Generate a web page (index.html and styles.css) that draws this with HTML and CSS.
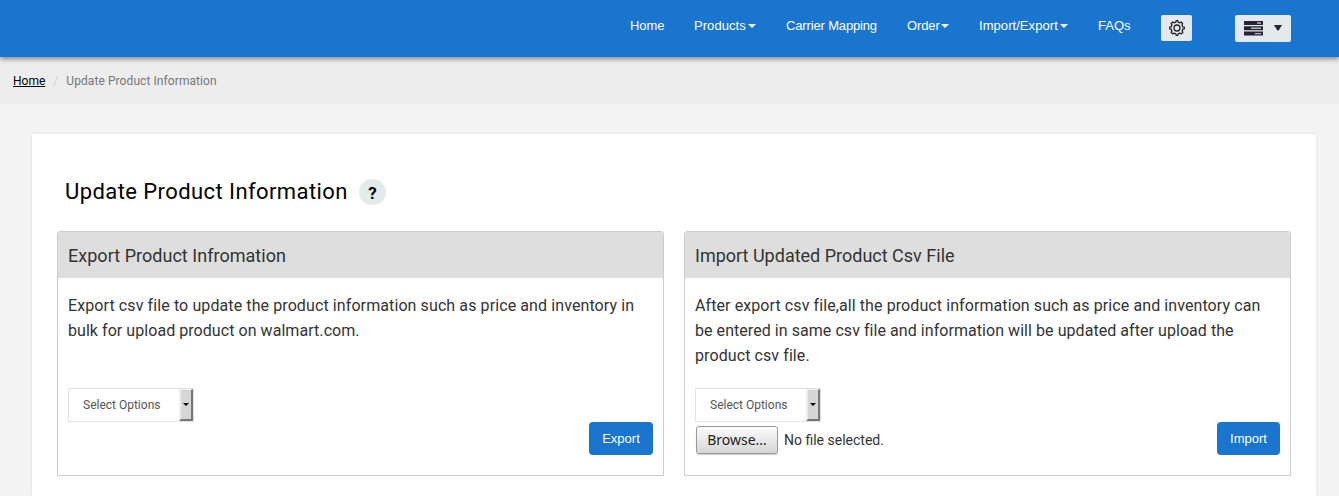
FILE: index.html
```html
<!DOCTYPE html>
<html lang="en">
<head>
<meta charset="utf-8">
<title>Update Product Information</title>
<link rel="stylesheet" href="styles.css">
</head>
<body>
<header class="navbar">
  <nav class="nav-links">
    <a class="nav-home">Home</a>
    <a class="nav-products">Products<i class="caret"></i></a>
    <a class="nav-carrier">Carrier Mapping</a>
    <a class="nav-order">Order<i class="caret"></i></a>
    <a class="nav-import">Import/Export<i class="caret"></i></a>
    <a class="nav-faqs">FAQs</a>
  </nav>
  <button class="gear-btn" aria-label="Settings">
    <svg width="16" height="16" viewBox="0 0 16 16" fill="none" stroke="#222" stroke-width="1.3" stroke-linejoin="round">
      <path d="M6.9 2.1 7.2.7H8.8L9.1 2.1 10.9 2.8 12.1 2 13.6 3.5 13 4.9 13.7 6.8 15.3 7.2V8.8L13.8 9.2 13.1 11 13.9 12.4 12.5 13.9 11.1 13.1 9.2 13.9 8.8 15.3H7.2L6.8 13.9 4.9 13.1 3.5 13.9 2.1 12.4 2.9 11 2.2 9.2.7 8.8V7.2L2.2 6.8 2.9 4.9 2.2 3.5 3.7 2 5 2.8Z"/>
      <circle cx="8" cy="8" r="3"/>
    </svg>
  </button>
  <button class="menu-btn" aria-label="Menu">
    <svg width="19" height="15" viewBox="0 0 19 15">
      <path fill="#272235" d="M0 0H19V4H0ZM0 5.3H19V9.3H0ZM0 10.6H19V14.6H0Z"/>
      <path fill="#b4b6be" d="M13 1.2H17V2.7H13ZM7 6.5H17V8H7ZM11 11.9H17V13.3H11Z"/>
    </svg>
    <svg width="8" height="6" viewBox="0 0 8 6"><path fill="#272235" d="M0 0H8L4.6 5.5H3.4Z"/></svg>
  </button>
</header>
<div class="breadcrumb"><a class="crumb-home">Home</a><span class="crumb-sep">/</span><span class="crumb-current">Update Product Information</span></div>
<main class="content">
  <div class="title-row"><h1 class="title">Update Product Information</h1><span class="help">?</span></div>
  <div class="panels">
    <section class="panel">
      <h2 class="panel-title panel-title-export">Export Product Infromation</h2>
      <div class="panel-body">
        <p class="desc">Export csv file to update the product information such as price and inventory in<br><span class="tight">bulk for upload product on walmart.com.</span></p>
        <div class="select"><span class="select-text">Select Options</span><span class="select-arrow"><i></i></span></div>
        <div class="actions"><span></span><button class="btn">Export</button></div>
      </div>
    </section>
    <section class="panel">
      <h2 class="panel-title">Import Updated Product Csv File</h2>
      <div class="panel-body">
        <p class="desc desc-import">After export csv file,all the product information such as price and inventory can<br><span class="tight">be entered in same csv file and information will be updated after upload the</span><br>product csv file.</p>
        <div class="select"><span class="select-text">Select Options</span><span class="select-arrow"><i></i></span></div>
        <div class="actions"><div class="file"><button class="browse">Browse...</button><span>No file selected.</span></div><button class="btn btn-import">Import</button></div>
      </div>
    </section>
  </div>
</main>
</body>
</html>
```
FILE: styles.css
```css
* { box-sizing: border-box; }
body { margin: 0; height: 496px; background: #f4f4f4; font-family: Roboto, sans-serif; color: #333; }
button { margin: 0; padding: 0; border: 0; }
.navbar { position: relative; height: 57px; padding: 15px 48px 0 0; display: flex; justify-content: flex-end; align-items: flex-start; background: #1a75cf; box-shadow: 0 2px 5px rgba(0,0,0,.45); }
.nav-links { display: flex; gap: 30px; margin-right: 30px; font: 13px/20px "Liberation Sans", Arial, sans-serif; color: #fff; }
.nav-links a { display: flex; align-items: center; justify-content: space-between; height: 21px; white-space: nowrap; }
.nav-home { width: 34px; letter-spacing: -.1px; }
.nav-products { width: 62px; letter-spacing: .05px; }
.nav-carrier { width: 91px; letter-spacing: -.15px; }
.nav-order { width: 42px; letter-spacing: -.1px; }
.nav-import { width: 89px; letter-spacing: .06px; }
.nav-faqs { width: 33px; }
.caret { border: 4px solid transparent; border-top-color: #fff; border-bottom: 0; }
.gear-btn { width: 31px; height: 26px; margin-right: 43px; border-radius: 2px; background: #e4e9ec; display: flex; align-items: center; justify-content: center; }
.menu-btn { width: 56px; height: 27px; padding: 0 9px; border-radius: 2px; background: #e4e9ec; display: flex; align-items: center; justify-content: space-between; }
.menu-btn svg:last-child { margin-bottom: 1px; }
.breadcrumb { height: 47px; padding-left: 13px; display: flex; align-items: center; background: #ededed; font-size: 12px; color: #777; }
.crumb-home { color: #000; text-decoration: underline; }
.crumb-sep { width: 21px; text-align: center; color: #ccc; }
.crumb-current { letter-spacing: .08px; }
.content { height: 362px; margin-top: 30px; margin-left: 32px; margin-right: 23px; padding: 43px 25px 0; background: #fff; box-shadow: 0 0 3px rgba(0,0,0,.1); }
.title-row { display: flex; align-items: center; height: 29px; padding-left: 8px; }
.title { margin: 0; font-size: 22px; font-weight: 400; line-height: 26px; letter-spacing: .42px; color: #000; }
.help { width: 27px; height: 26px; margin-left: 11px; border-radius: 50%; background: #e4e9ec; color: #000; font-size: 17px; font-weight: 700; line-height: 28px; text-align: center; }
.panels { display: grid; grid-template-columns: 607px 607px; gap: 20px; margin-top: 25px; }
.panel { height: 245px; border: 1px solid #ccc; border-radius: 3px 3px 0 0; }
.panel-title { height: 46px; margin: 0; padding: 0 10px; background: #dedede; font-size: 18px; font-weight: 400; line-height: 47px; border-radius: 2px 2px 0 0; }
.panel-title-export { letter-spacing: .03px; }
.panel-body { padding: 15px 10px 0; }
.desc { height: 95px; margin: 0; font-size: 16px; line-height: 25px; letter-spacing: .1px; white-space: nowrap; }
.desc-import { letter-spacing: .09px; }
.tight { letter-spacing: .055px; }
.select { width: 126px; height: 34px; border: 1px solid #e2e2e2; display: flex; justify-content: space-between; font-size: 12px; line-height: 32px; color: #555; }
.select-text { padding-left: 14px; }
.select-arrow { width: 14px; border-style: solid; border-width: 1px 2px 2px; border-color: #eee #777 #777 #eee; background: #d6d6d6; display: flex; align-items: center; justify-content: center; }
.select-arrow i { border: 3px solid transparent; border-top-color: #000; border-bottom: 0; }
.actions { display: flex; justify-content: space-between; height: 33px; }
.btn { width: 64px; height: 33px; border-radius: 4px; background: #1a75cf; color: #fff; font: 13px "Liberation Sans", Arial, sans-serif; }
.btn-import { width: 63px; }
.file { display: flex; align-items: center; gap: 6px; padding: 3px 0 0 1px; font-size: 14px; }
.browse { width: 82px; height: 28px; padding-bottom: 2px; border: 1px solid #999; border-radius: 3px; background: linear-gradient(#fcfcfc, #d6d6d6); box-shadow: 0 1px 1px rgba(0,0,0,.2); font: 14px "Noto Sans", sans-serif; color: #222; }
```
